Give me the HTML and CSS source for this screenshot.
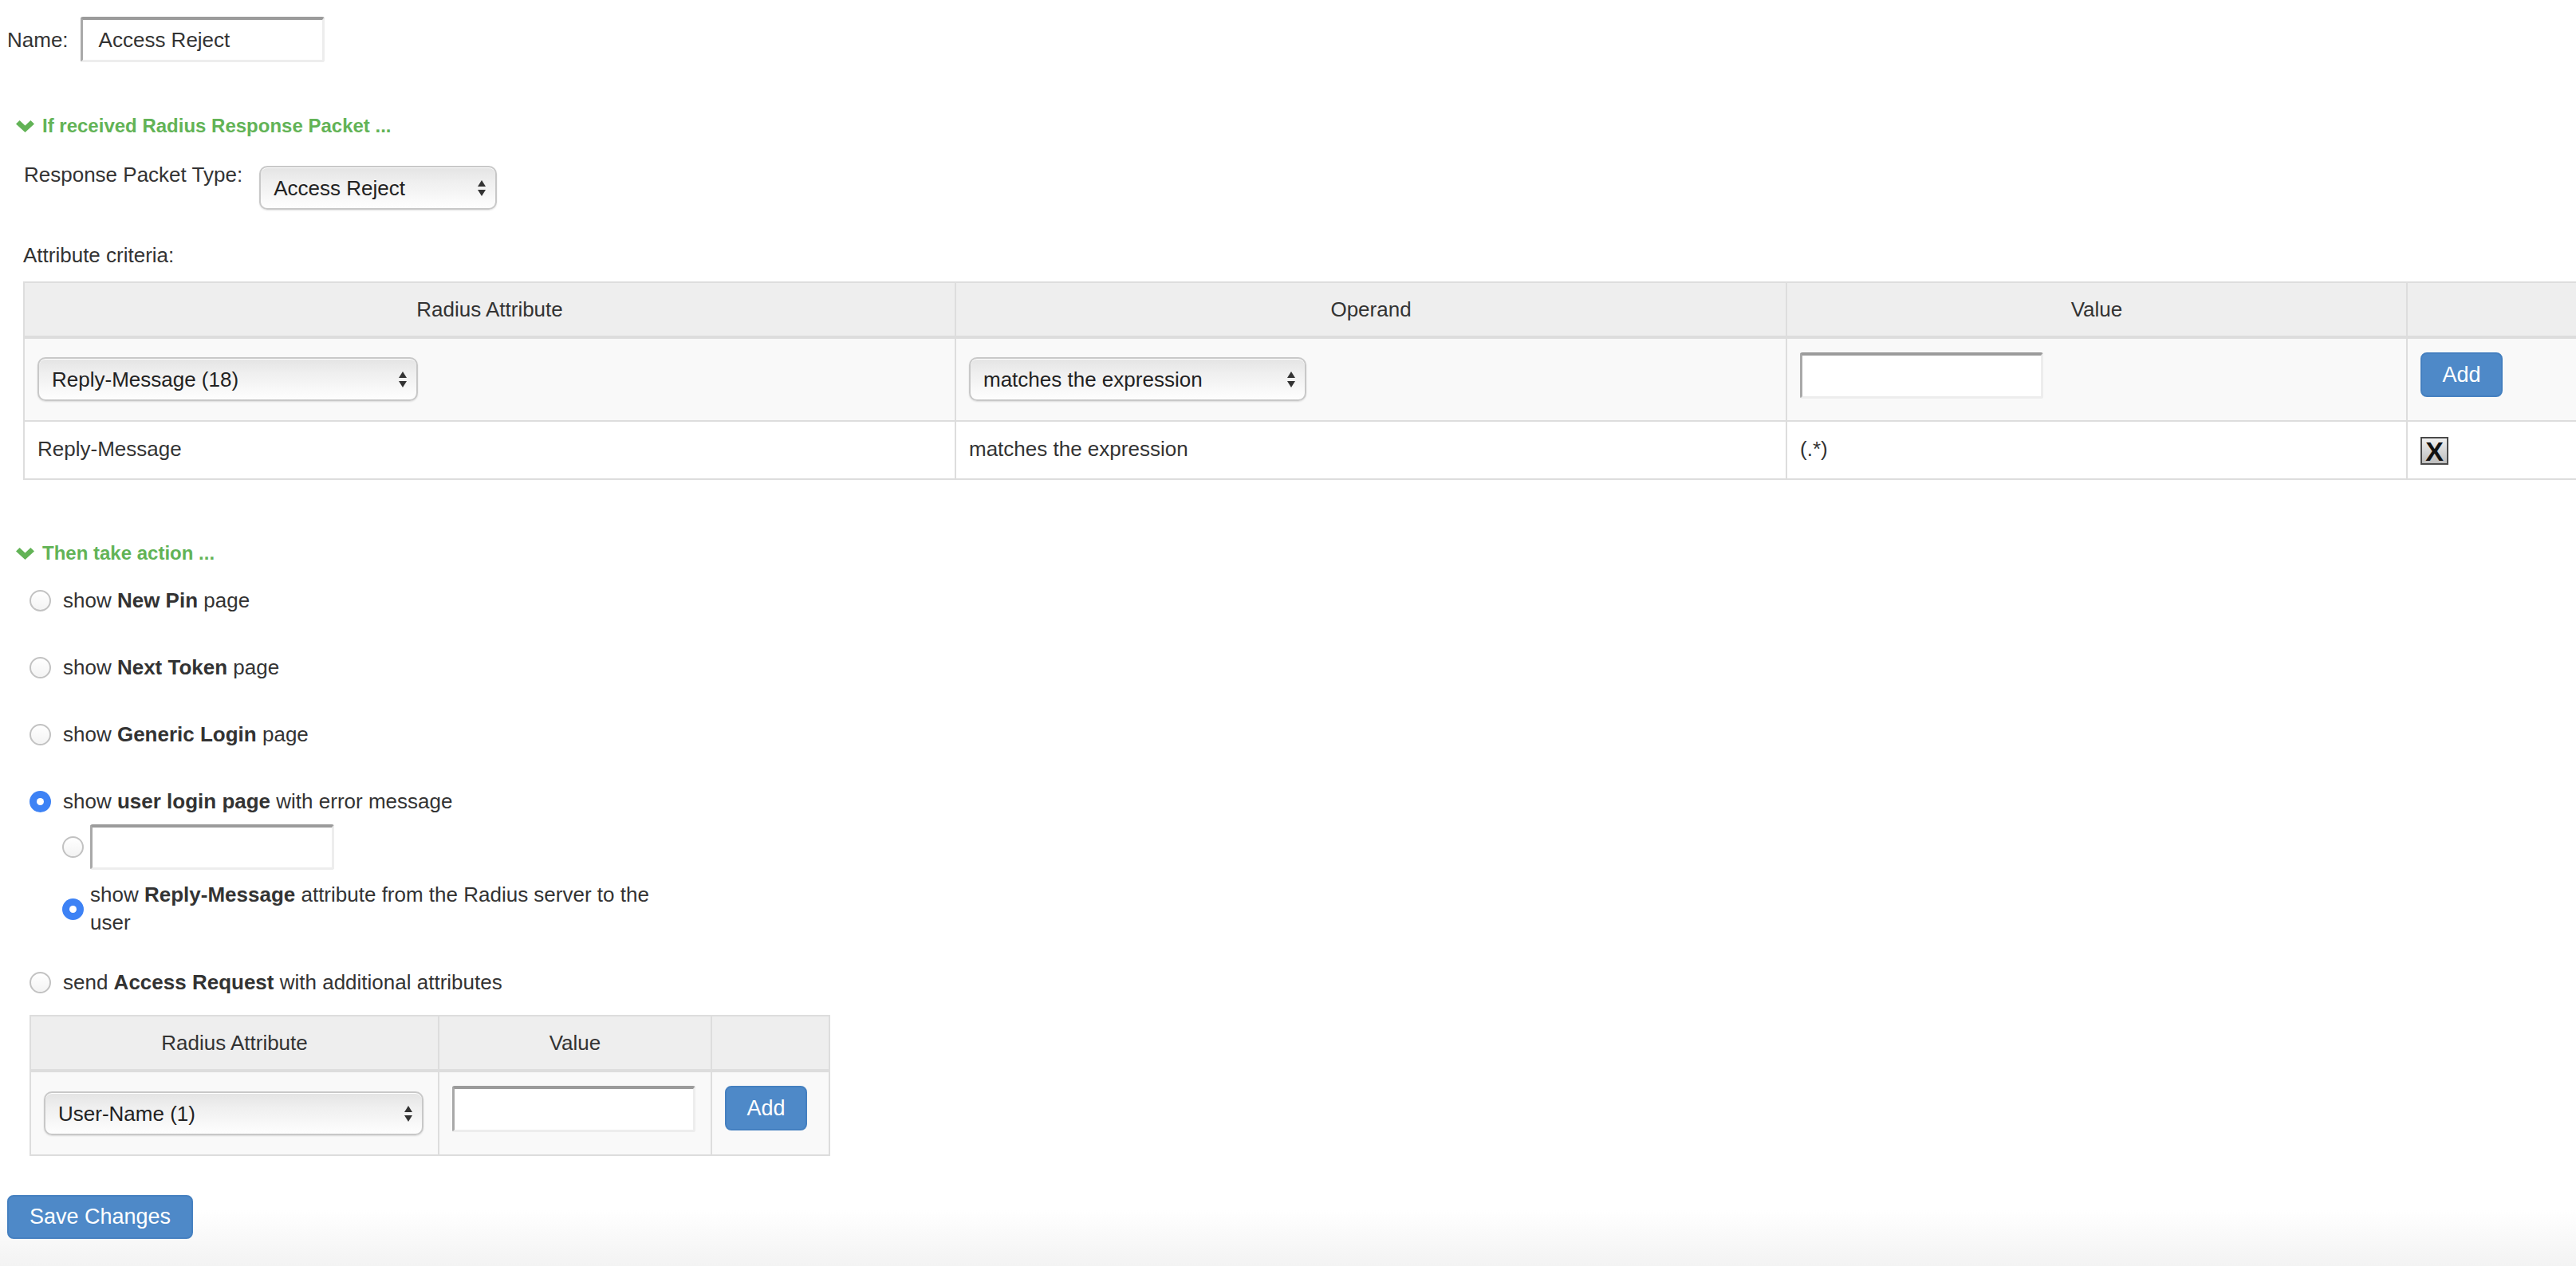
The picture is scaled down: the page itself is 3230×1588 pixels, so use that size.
FILE: index.html
```html
<!DOCTYPE html>
<html lang="en">
<head>
<meta charset="utf-8">
<title>Access Reject</title>
<link rel="stylesheet" href="styles.css">
</head>
<body>
<div class="page">
  <div class="name-row">
    <span class="lbl">Name:</span>
    <div class="field name-field">Access Reject</div>
  </div>

  <div class="section-title">
    <svg class="chev" viewBox="0 0 23 15"><path d="M0 4.6 L4.6 0 L11.5 6.6 L18.4 0 L23 4.6 L11.5 15 Z" fill="currentColor"/></svg>
    <span>If received Radius Response Packet ...</span>
  </div>

  <div class="type-row">
    <span>Response Packet Type:</span>
    <div class="select type-select"><span>Access Reject</span><svg class="arr" viewBox="0 0 10 20"><path d="M5 0 L10 8 L0 8 Z M0 12 L10 12 L5 20 Z" fill="#333"/></svg></div>
  </div>

  <div class="crit-label">Attribute criteria:</div>

  <div class="table-wrap">
    <table class="grid crit">
      <colgroup><col class="c1"><col class="c2"><col class="c3"><col class="c4"></colgroup>
      <thead>
        <tr><th>Radius Attribute</th><th>Operand</th><th>Value</th><th></th></tr>
      </thead>
      <tbody>
        <tr class="edit">
          <td><div class="select attr-select"><span>Reply-Message (18)</span><svg class="arr" viewBox="0 0 10 20"><path d="M5 0 L10 8 L0 8 Z M0 12 L10 12 L5 20 Z" fill="#333"/></svg></div></td>
          <td><div class="select op-select"><span>matches the expression</span><svg class="arr" viewBox="0 0 10 20"><path d="M5 0 L10 8 L0 8 Z M0 12 L10 12 L5 20 Z" fill="#333"/></svg></div></td>
          <td><div class="field value-field"></div></td>
          <td><button class="btn add">Add</button></td>
        </tr>
        <tr>
          <td>Reply-Message</td>
          <td>matches the expression</td>
          <td>(.*)</td>
          <td><span class="del">X</span></td>
        </tr>
      </tbody>
    </table>
  </div>

  <div class="section-title action-title">
    <svg class="chev" viewBox="0 0 23 15"><path d="M0 4.6 L4.6 0 L11.5 6.6 L18.4 0 L23 4.6 L11.5 15 Z" fill="currentColor"/></svg>
    <span>Then take action ...</span>
  </div>

  <div class="actions">
    <div class="opt first"><span class="radio"></span><span>show <b>New Pin</b> page</span></div>
    <div class="opt"><span class="radio"></span><span>show <b>Next Token</b> page</span></div>
    <div class="opt"><span class="radio"></span><span>show <b>Generic Login</b> page</span></div>
    <div class="opt"><span class="radio on"></span><span>show <b>user login page</b> with error message</span></div>
    <div class="sub">
      <div class="sub-row"><span class="radio"></span><div class="field msg-field"></div></div>
      <div class="sub-row reply"><span class="radio on"></span>
        <div class="reply-text">
          <span class="ln">show <b>Reply-Message</b> attribute from the Radius server to the</span>
          <span class="ln">user</span>
        </div>
      </div>
    </div>
    <div class="opt send"><span class="radio"></span><span>send <b>Access Request</b> with additional attributes</span></div>

    <table class="grid extra">
      <colgroup><col class="e1"><col class="e2"><col class="e3"></colgroup>
      <thead>
        <tr><th>Radius Attribute</th><th>Value</th><th></th></tr>
      </thead>
      <tbody>
        <tr class="edit">
          <td><div class="select user-select"><span>User-Name (1)</span><svg class="arr" viewBox="0 0 10 20"><path d="M5 0 L10 8 L0 8 Z M0 12 L10 12 L5 20 Z" fill="#333"/></svg></div></td>
          <td><div class="field extra-field"></div></td>
          <td><button class="btn add">Add</button></td>
        </tr>
      </tbody>
    </table>
  </div>

  <button class="btn save">Save Changes</button>
</div>
</body>
</html>
```
FILE: styles.css
```css
* { box-sizing: border-box; }

html, body { margin: 0; padding: 0; }

body {
  font-family: "Liberation Sans", Arial, Helvetica, sans-serif;
  font-size: 26px;
  line-height: 34px;
  color: #333;
  min-height: 100vh;
  overflow: hidden;
  background: linear-gradient(to bottom, #ffffff calc(100% - 70px), #f3f3f3 100%);
}

.page { padding: 21px 0 0 9px; }

b { font-weight: bold; color: #333; }

/* name row */
.name-row { display: flex; align-items: center; gap: 15px; height: 57px; }

.field {
  background: #fff;
  height: 57px;
  border-top: 4px solid #9b9b9b;
  border-left: 3px solid #a9a9a9;
  border-right: 3px solid #ededed;
  border-bottom: 3px solid #ededed;
  border-radius: 3px;
  display: flex;
  align-items: center;
  padding-left: 20px;
  color: #333;
}
.name-field { width: 306px; }
.value-field { width: 305px; height: 58px; }
.msg-field { width: 306px; }
.extra-field { width: 305px; height: 58px; }

/* section titles */
.section-title {
  margin-top: 63px;
  padding-left: 11px;
  display: flex;
  align-items: center;
  gap: 10px;
  height: 34px;
  color: #62b356;
  font-weight: bold;
  font-size: 24px;
}
.chev { width: 23px; height: 15px; display: block; }
.action-title { margin-top: 75px; }

/* select look */
.select {
  height: 55px;
  border: 2px solid #c8c8c8;
  border-radius: 10px;
  background: linear-gradient(to bottom, #e4e4e4 0%, #efefef 35%, #f7f7f7 70%, #fefefe 100%);
  box-shadow: 0 1px 2px rgba(0,0,0,0.12), inset 0 1px 0 #fff;
  display: flex;
  align-items: center;
  justify-content: space-between;
  padding: 0 12px 0 16px;
  color: #222;
}
.arr { width: 10px; height: 20px; display: block; }

.type-row {
  margin-top: 27px;
  padding-left: 21px;
  display: flex;
  align-items: flex-start;
  gap: 21px;
}
.type-select { margin-top: 6px; width: 298px; }

.crit-label { margin-top: 40px; padding-left: 20px; }

.table-wrap { margin-top: 16px; padding-left: 20px; }

/* tables */
table.grid { border-collapse: collapse; table-layout: fixed; }
.grid th {
  background: #eeeeee;
  font-weight: normal;
  text-align: center;
  padding: 16px;
  border: 2px solid #dddddd;
  border-bottom-width: 4px;
  color: #333;
}
.grid td {
  padding: 17px 16px;
  border: 2px solid #dddddd;
  vertical-align: top;
  text-align: left;
  background: #fff;
}
.grid tr.edit td { background: #f9f9f9; padding-bottom: 24px; }

.crit { width: 3250px; }
.crit .c1 { width: 1168px; }
.crit .c2 { width: 1042px; }
.crit .c3 { width: 778px; }
.crit .c4 { width: 262px; }

.attr-select { margin-top: 6px; width: 477px; }
.op-select { margin-top: 6px; width: 423px; }

/* buttons */
.btn {
  font-family: inherit;
  font-size: 27px;
  color: #fff;
  background: #4e89c8;
  border: 2px solid #4580c0;
  border-radius: 8px;
  padding: 0;
  cursor: pointer;
}
.add { width: 103px; height: 56px; }
.save { width: 233px; height: 55px; margin-top: 49px; display: block; }

.del {
  margin-top: 2px;
  width: 35px;
  height: 35px;
  border: 2px solid #4a4a4a;
  background: linear-gradient(to bottom, #f0f0f0, #bdbdbd);
  display: flex;
  align-items: center;
  justify-content: center;
  font-size: 34px;
  font-weight: bold;
  line-height: 1;
  color: #111;
}

/* actions */
.actions { padding-left: 28px; }

.opt {
  display: flex;
  align-items: center;
  gap: 15px;
  height: 34px;
  margin-top: 50px;
}
.opt.first { margin-top: 25px; }
.opt.send { margin-top: 40px; }

.radio {
  flex: none;
  width: 27px;
  height: 27px;
  border-radius: 50%;
  border: 2px solid #c2c2c2;
  background: linear-gradient(to bottom, #ffffff, #f3f3f3);
  position: relative;
}
.radio.on {
  border: none;
  background: #3d82f5;
}
.radio.on::after {
  content: "";
  position: absolute;
  left: 50%;
  top: 50%;
  width: 9px;
  height: 9px;
  margin: -4.5px 0 0 -4.5px;
  border-radius: 50%;
  background: #fff;
}

.sub { padding-left: 41px; }
.sub-row { display: flex; align-items: center; gap: 8px; margin-top: 12px; }
.sub-row.reply { margin-top: 14px; }
.reply-text { display: flex; flex-direction: column; line-height: 35px; }
.reply-text .ln { display: block; white-space: nowrap; }

.extra { margin-top: 24px; width: 1002px; }
.extra .e1 { width: 512px; }
.extra .e2 { width: 342px; }
.extra .e3 { width: 148px; }
.user-select { margin-top: 7px; width: 476px; }
```
